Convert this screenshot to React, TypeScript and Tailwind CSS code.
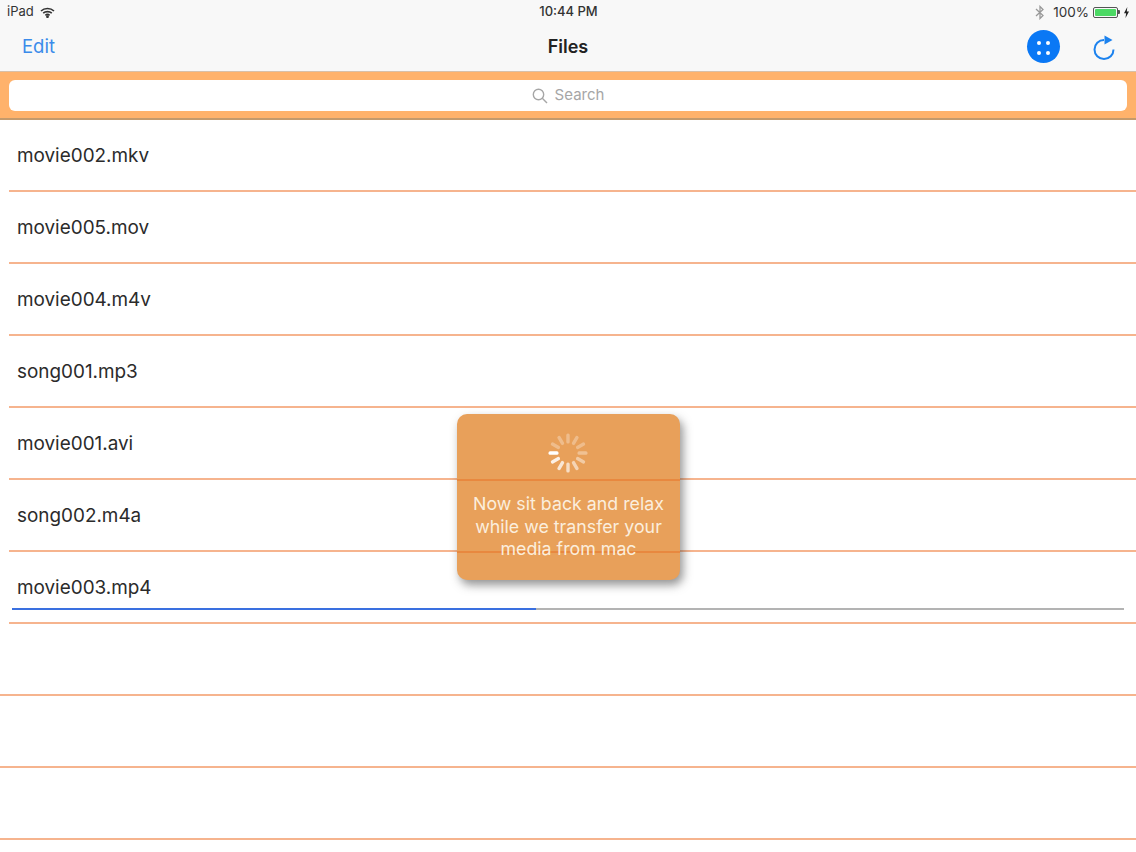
const files = [
  "movie002.mkv",
  "movie005.mov",
  "movie004.m4v",
  "song001.mp3",
  "movie001.avi",
  "song002.m4a",
  "movie003.mp4",
];

const spinnerOpacity = [1, 0.85, 0.75, 0.65, 0.55, 0.45, 0.35, 0.3, 0.3, 0.3, 0.3, 0.3];

const StatusBar = () => (
  <div className="h-[24px] flex items-center justify-between pl-[7px] pr-[6px] text-[13px] text-[#333]">
    <div className="w-[200px] flex items-center gap-[6px]">
      <span>iPad</span>
      <svg width="15" height="11" viewBox="0 0 15 11" fill="none" stroke="#333" strokeWidth="1.6">
        <path d="M1 4 C4.5 0.7 10.5 0.7 14 4" />
        <path d="M3.2 6.2 C5.5 4.1 9.5 4.1 11.8 6.2" />
        <path d="M5.4 8.3 C6.6 7.3 8.4 7.3 9.6 8.3" />
        <circle cx="7.5" cy="9.7" r="0.6" fill="#333" />
      </svg>
    </div>
    <span className="font-medium">10:44 PM</span>
    <div className="w-[200px] flex items-center justify-end">
      <svg className="mr-[8px]" width="10" height="15" viewBox="0 0 10 15" fill="none" stroke="#999" strokeWidth="1.3">
        <path d="M1 4 L8 10.5 L5 13.5 V1.5 L8 4.5 L1 11" />
      </svg>
      <span className="mr-[4px] text-[13.5px]">100%</span>
      <div className="w-[25px] h-[11px] border border-[#555] rounded-[2px] p-[1px]">
        <div className="h-full bg-[#4cd964] rounded-[1px]" />
      </div>
      <div className="w-[2px] h-[4px] bg-[#555] rounded-r-[1px] mr-[3px]" />
      <svg width="7" height="11" viewBox="0 0 6 11" fill="#222">
        <path d="M3.8 0 L0.5 6.2 H2.6 L2 11 L5.5 4.6 H3.3 Z" />
      </svg>
    </div>
  </div>
);

const NavBar = () => (
  <div className="h-[47px] flex items-center justify-between pl-[22px] pr-[20px] pb-[2px]">
    <span className="w-[200px] text-[18.5px] text-[#3b8bea]">Edit</span>
    <span className="text-[18px] font-semibold text-[#222]">Files</span>
    <div className="w-[202px] flex items-center justify-end gap-[32px]">
      <button className="size-[33px] rounded-full bg-[#0a78f5] grid grid-cols-2 gap-[6px] p-[10.5px]">
        <span className="size-[4px] rounded-full bg-white" />
        <span className="size-[4px] rounded-full bg-white" />
        <span className="size-[4px] rounded-full bg-white" />
        <span className="size-[4px] rounded-full bg-white" />
      </button>
      <svg width="24" height="28" viewBox="0 0 24 28" fill="none">
        <path d="M12 7 A9.5 9.5 0 1 0 21.5 16.5" stroke="#1c82ee" strokeWidth="2" />
        <path d="M12.5 2.5 L20.5 7 L12.5 11.5 Z" fill="#1c82ee" />
      </svg>
    </div>
  </div>
);

const Toast = () => (
  <div className="absolute left-[457px] top-[414px] w-[223px] h-[166px] rounded-[10px] bg-[#e8a05a] shadow-[3px_5px_10px_rgba(60,60,60,0.55)] flex flex-col items-center">
    <div className="absolute left-0 right-0 top-[65px] h-[2px] bg-[#e8883f]" />
    <div className="absolute left-0 right-0 top-[137px] h-[2px] bg-[#e8883f]" />
    <svg className="relative mt-[19px] mr-[2px]" width="40" height="40" viewBox="0 0 40 40">
      {spinnerOpacity.map((o, i) => (
        <rect
          key={i}
          x="0.5"
          y="18.3"
          width="10"
          height="3.4"
          rx="1.5"
          fill="#fff"
          opacity={o}
          transform={`rotate(${-30 * i} 20 20)`}
        />
      ))}
    </svg>
    <p className="relative mt-[20px] text-[17.8px] leading-[22.5px] text-center text-[#fbeedd]">
      Now sit back and relax
      <br />
      while we transfer your
      <br />
      media from mac
    </p>
  </div>
);

const Row = ({ name, progress }: { name?: string; progress?: boolean }) => (
  <div className="relative h-[72px] flex flex-col">
    <div className="flex-1 flex items-center pl-[17px] pt-[2px] text-[18.9px] text-[#2b2b2b]">{name}</div>
    {progress && (
      <div className="absolute left-[12px] right-[12px] top-[56px] h-[2px] bg-[#b3b3b3]">
        <div className="h-full w-[47.1%] bg-[#3a70e0]" />
      </div>
    )}
    <div className={name ? "ml-[9px] h-[2px] bg-[#f6b48e]" : "h-[2px] bg-[#f6b48e]"} />
  </div>
);

export default function App() {
  return (
    <div
      className="relative w-[1136px] h-[852px] overflow-hidden bg-white"
      style={{ fontFamily: "Inter, 'Liberation Sans', sans-serif" }}
    >
      <div className="bg-[#f8f8f8]">
        <StatusBar />
        <NavBar />
      </div>
      <div className="h-[49px] bg-[#ffb26b] border-t border-[#d8c0a8] border-b-2 border-b-[#c49a6c] px-[9px] pt-[8px] pb-[7px]">
        <div className="h-[31px] rounded-[6px] bg-white flex items-center justify-center gap-[7px] text-[15px] text-[#a6a6a6]">
          <svg width="16" height="16" viewBox="0 0 16 16" fill="none" stroke="#a6a6a6" strokeWidth="1.4">
            <circle cx="6.5" cy="6.5" r="5.2" />
            <path d="M10.3 10.3 L15 15" />
          </svg>
          <span>Search</span>
        </div>
      </div>
      {files.map((f) => (
        <Row key={f} name={f} progress={f === "movie003.mp4"} />
      ))}
      <Row />
      <Row />
      <Row />
      <Toast />
    </div>
  );
}
